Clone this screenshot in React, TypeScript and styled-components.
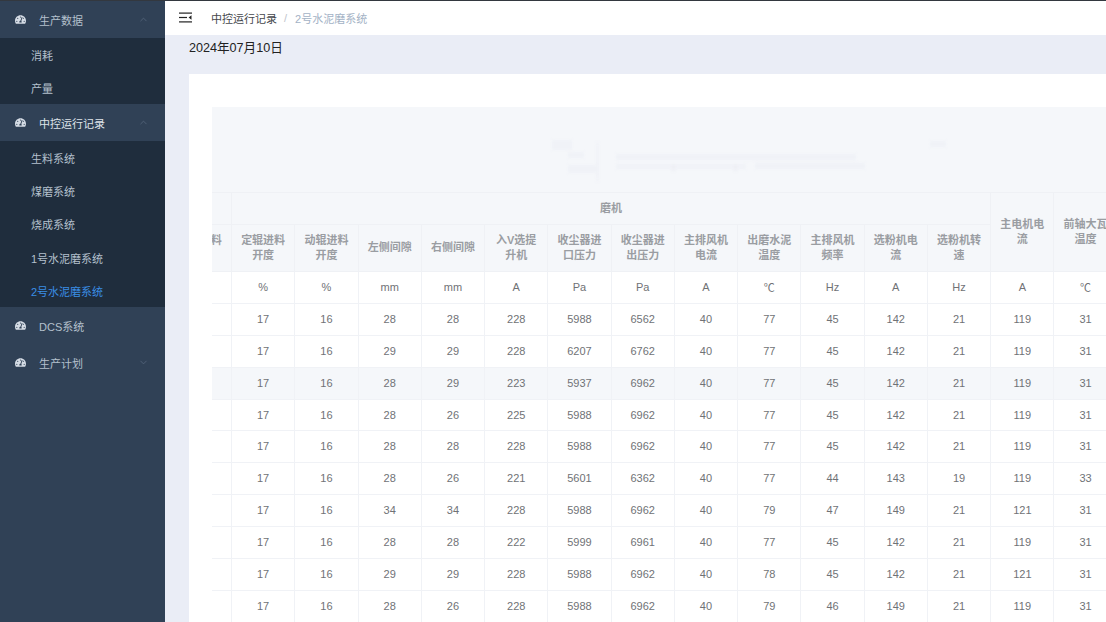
import React from 'react';
import styled, { createGlobalStyle } from 'styled-components';
import { FaTachometerAlt } from 'react-icons/fa';
import { ChevronDown, ChevronUp } from 'lucide-react';

const GlobalStyle = createGlobalStyle`
  html, body {
    margin: 0;
    height: 100%;
    overflow: hidden;
    background: #eaedf6;
    font-family: "Liberation Sans", "Noto Sans CJK SC", sans-serif;
  }
  * {
    box-sizing: border-box;
  }
`;

// Layout
const Page = styled.div`
  display: flex;
  flex-direction: column;
  height: 100vh;
  overflow: hidden;
`;

const TopEdge = styled.div`
  flex: none;
  height: 1px;
  background: #33383f;
`;

const Body = styled.div`
  flex: 1;
  display: flex;
  min-height: 0;
`;

// Sidebar
const Sidebar = styled.aside`
  flex: none;
  width: 165px;
  background: #304156;
`;

const MenuTitle = styled.div<{ $bright?: boolean }>`
  display: flex;
  align-items: center;
  height: 37px;
  padding: 0 16px 0 15px;
  font-size: 11px;
  color: ${(p) => (p.$bright ? '#dfe4ea' : '#b4c0cd')};

  svg.gauge {
    flex: none;
    margin-right: 13px;
    color: #d5dce5;
  }

  span {
    flex: 1;
  }

  svg.arrow {
    flex: none;
    color: #5c6c82;
  }
`;

const SubMenu = styled.div`
  background: #1f2d3d;
`;

const SubItem = styled.div<{ $active?: boolean }>`
  display: flex;
  align-items: center;
  height: 33.2px;
  padding-left: 31px;
  font-size: 11px;
  color: ${(p) => (p.$active ? '#3a8ee6' : '#b4c0cd')};
`;

// Main area
const Main = styled.main`
  flex: 1;
  min-width: 0;
  display: flex;
  flex-direction: column;
`;

const Navbar = styled.header`
  flex: none;
  display: flex;
  align-items: center;
  height: 34px;
  padding: 0 0 1px 14px;
  background: #fff;
  font-size: 11px;

  svg {
    margin-right: 19px;
  }
`;

const Crumb = styled.span`
  color: #45474c;
`;

const CrumbSep = styled.span`
  margin: 0 8px 0 7px;
  color: #c0c4cc;
`;

const CrumbLast = styled.span`
  color: #a3b2c5;
`;

const DateBar = styled.div`
  flex: none;
  height: 39px;
  padding: 5px 0 0 24px;
  font-size: 12.6px;
  line-height: 16px;
  color: #222;
`;

const Card = styled.section`
  flex: 1;
  min-height: 0;
  margin-left: 24px;
  padding: 33px 0 0 23px;
  background: #fff;
  overflow: hidden;
`;

// Table
const TableClip = styled.div`
  overflow: hidden;
`;

const Table = styled.table`
  width: 949px;
  margin-left: -43.27px;
  table-layout: fixed;
  border-collapse: separate;
  border-spacing: 0;
  font-size: 11px;
`;

const HeadCell = styled.th`
  padding: 0 7px 1px;
  background: #f5f7fa;
  border-right: 1px solid #eff1f5;
  border-bottom: 1px solid #eff1f5;
  font-weight: 700;
  line-height: 15px;
  color: #9a9da2;
  text-align: center;
  vertical-align: middle;
`;

const TitleCell = styled(HeadCell)`
  height: 85px;
  padding: 0 0 0 381px;
  border-right: 0;

  svg {
    display: block;
    filter: blur(1.5px);
  }
`;

const GroupCell = styled(HeadCell)`
  height: 32px;
`;

const ColumnCell = styled(HeadCell)`
  height: 47px;
`;

const Row = styled.tr<{ $hover?: boolean }>`
  td {
    background: ${(p) => (p.$hover ? '#f5f7fa' : '#fff')};
  }
`;

const Cell = styled.td`
  height: 31.9px;
  padding: 0 0 1px;
  border-right: 1px solid #f0f2f6;
  border-bottom: 1px solid #f0f2f6;
  color: #707276;
  text-align: center;
`;

const menu = [
  { title: '生产数据', open: true, items: ['消耗', '产量'] },
  {
    title: '中控运行记录',
    open: true,
    bright: true,
    items: ['生料系统', '煤磨系统', '烧成系统', '1号水泥磨系统', '2号水泥磨系统'],
  },
  { title: 'DCS系统', open: false, noArrow: true, items: [] },
  { title: '生产计划', open: false, items: [] },
];

const groupColumns = [
  '定辊进料开度',
  '动辊进料开度',
  '左侧间隙',
  '右侧间隙',
  '入V选提升机',
  '收尘器进口压力',
  '收尘器进出压力',
  '主排风机电流',
  '出磨水泥温度',
  '主排风机频率',
  '选粉机电流',
  '选粉机转速',
];

const units = ['', '%', '%', 'mm', 'mm', 'A', 'Pa', 'Pa', 'A', '℃', 'Hz', 'A', 'Hz', 'A', '℃'];

const rows = [
  [28, 28, 228, 5988, 6562, 40, 77, 45, 142, 21, 119, 31],
  [29, 29, 228, 6207, 6762, 40, 77, 45, 142, 21, 119, 31],
  [28, 29, 223, 5937, 6962, 40, 77, 45, 142, 21, 119, 31],
  [28, 26, 225, 5988, 6962, 40, 77, 45, 142, 21, 119, 31],
  [28, 28, 228, 5988, 6962, 40, 77, 45, 142, 21, 119, 31],
  [28, 26, 221, 5601, 6362, 40, 77, 44, 143, 19, 119, 33],
  [34, 34, 228, 5988, 6962, 40, 79, 47, 149, 21, 121, 31],
  [28, 28, 222, 5999, 6961, 40, 77, 45, 142, 21, 119, 31],
  [29, 29, 228, 5988, 6962, 40, 78, 45, 142, 21, 121, 31],
  [28, 26, 228, 5988, 6962, 40, 79, 46, 149, 21, 119, 31],
];

const Hamburger = () => (
  <svg width="13" height="11" viewBox="0 0 13 11">
    <g fill="#222">
      <rect x="0" y="0.5" width="13" height="1.2" />
      <rect x="0" y="4.9" width="8" height="1.2" />
      <rect x="0" y="9.3" width="13" height="1.2" />
      <path d="M12.5 3.2v4.6L9.6 5.5z" />
    </g>
  </svg>
);

// the washed-out logo sitting in the title row
const TitleMark = () => (
  <svg width="410" height="85" viewBox="0 0 410 85" aria-hidden="true">
    <g fill="#f0f2f7">
      <rect x="2" y="33" width="20" height="10" />
      <rect x="18" y="45" width="16" height="6" />
      <rect x="18" y="58" width="30" height="8" />
      <rect x="46" y="36" width="3" height="38" />
      <rect x="66" y="47" width="240" height="6" />
      <rect x="66" y="57" width="130" height="5" />
      <rect x="205" y="56" width="110" height="6" />
      <rect x="380" y="34" width="16" height="6" />
    </g>
    <g fill="#eceef4">
      <rect x="122" y="57" width="3" height="7" />
      <rect x="184" y="57" width="3" height="7" />
    </g>
  </svg>
);

const App: React.FC = () => {
  return (
    <Page>
      <GlobalStyle />
      <TopEdge />
      <Body>
        <Sidebar>
          {menu.map((group) => (
            <div key={group.title}>
              <MenuTitle $bright={group.bright}>
                <FaTachometerAlt className="gauge" size={11} />
                <span>{group.title}</span>
                {!group.noArrow &&
                  (group.open ? (
                    <ChevronUp className="arrow" size={11} strokeWidth={1.5} />
                  ) : (
                    <ChevronDown className="arrow" size={11} strokeWidth={1.5} />
                  ))}
              </MenuTitle>
              {group.items.length > 0 && (
                <SubMenu>
                  {group.items.map((item) => (
                    <SubItem key={item} $active={item === '2号水泥磨系统'}>
                      {item}
                    </SubItem>
                  ))}
                </SubMenu>
              )}
            </div>
          ))}
        </Sidebar>

        <Main>
          <Navbar>
            <Hamburger />
            <Crumb>中控运行记录</Crumb>
            <CrumbSep>/</CrumbSep>
            <CrumbLast>2号水泥磨系统</CrumbLast>
          </Navbar>
          <DateBar>2024年07月10日</DateBar>
          <Card>
            <TableClip>
              <Table>
                <thead>
                  <tr>
                    <TitleCell colSpan={15}>
                      <TitleMark />
                    </TitleCell>
                  </tr>
                  <tr>
                    <GroupCell />
                    <GroupCell colSpan={12}>磨机</GroupCell>
                    <HeadCell rowSpan={2}>主电机电流</HeadCell>
                    <HeadCell rowSpan={2}>前轴大瓦温度</HeadCell>
                  </tr>
                  <tr>
                    <ColumnCell>配料进料开度</ColumnCell>
                    {groupColumns.map((name) => (
                      <ColumnCell key={name}>{name}</ColumnCell>
                    ))}
                  </tr>
                </thead>
                <tbody>
                  <Row>
                    {units.map((unit, i) => (
                      <Cell key={i}>{unit}</Cell>
                    ))}
                  </Row>
                  {rows.map((row, r) => (
                    <Row key={r} $hover={r === 2}>
                      <Cell />
                      <Cell>17</Cell>
                      <Cell>16</Cell>
                      {row.map((value, i) => (
                        <Cell key={i}>{value}</Cell>
                      ))}
                    </Row>
                  ))}
                </tbody>
              </Table>
            </TableClip>
          </Card>
        </Main>
      </Body>
    </Page>
  );
};

export default App;
